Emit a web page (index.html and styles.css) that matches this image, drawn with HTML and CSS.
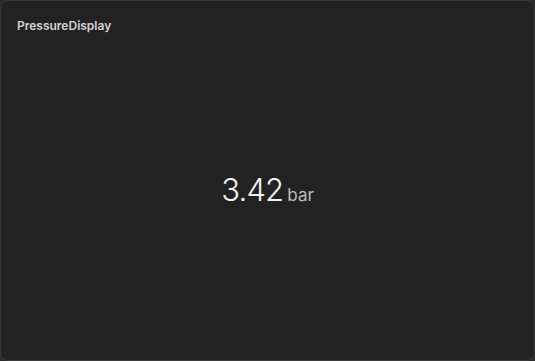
FILE: index.html
```html
<!DOCTYPE html>
<html>
<head>
<meta charset="utf-8">
<link rel="stylesheet" href="styles.css">
</head>
<body>
<div class="card">
  <div class="title">PressureDisplay</div>
  <div class="body">
    <div class="reading"><span class="value">3.42</span><span class="unit">bar</span></div>
  </div>
</div>
</body>
</html>
```

FILE: styles.css
```css
html, body {
  margin: 0;
  padding: 0;
  width: 535px;
  height: 361px;
  background: #2a2a2a;
  overflow: hidden;
}
.card {
  box-sizing: border-box;
  width: 535px;
  height: 361px;
  background: #222222;
  border: 1px solid #3b3b3b;
  border-radius: 8px;
  padding: 17px 16px 16px 16px;
  display: flex;
  flex-direction: column;
  font-family: Inter, "Noto Sans", sans-serif;
}
.title {
  font-size: 12px;
  font-weight: 600;
  line-height: 16px;
  color: #d4d4d4;
}
.body {
  flex: 1;
  display: flex;
  align-items: center;
  justify-content: center;
}
.reading {
  display: flex;
  align-items: baseline;
  gap: 4px;
}
.value {
  font-size: 31px;
  font-weight: 300;
  color: #f2f2f2;
  letter-spacing: -0.8px;
}
.unit {
  font-size: 17px;
  font-weight: 400;
  color: #bdbdbd;
}
```
